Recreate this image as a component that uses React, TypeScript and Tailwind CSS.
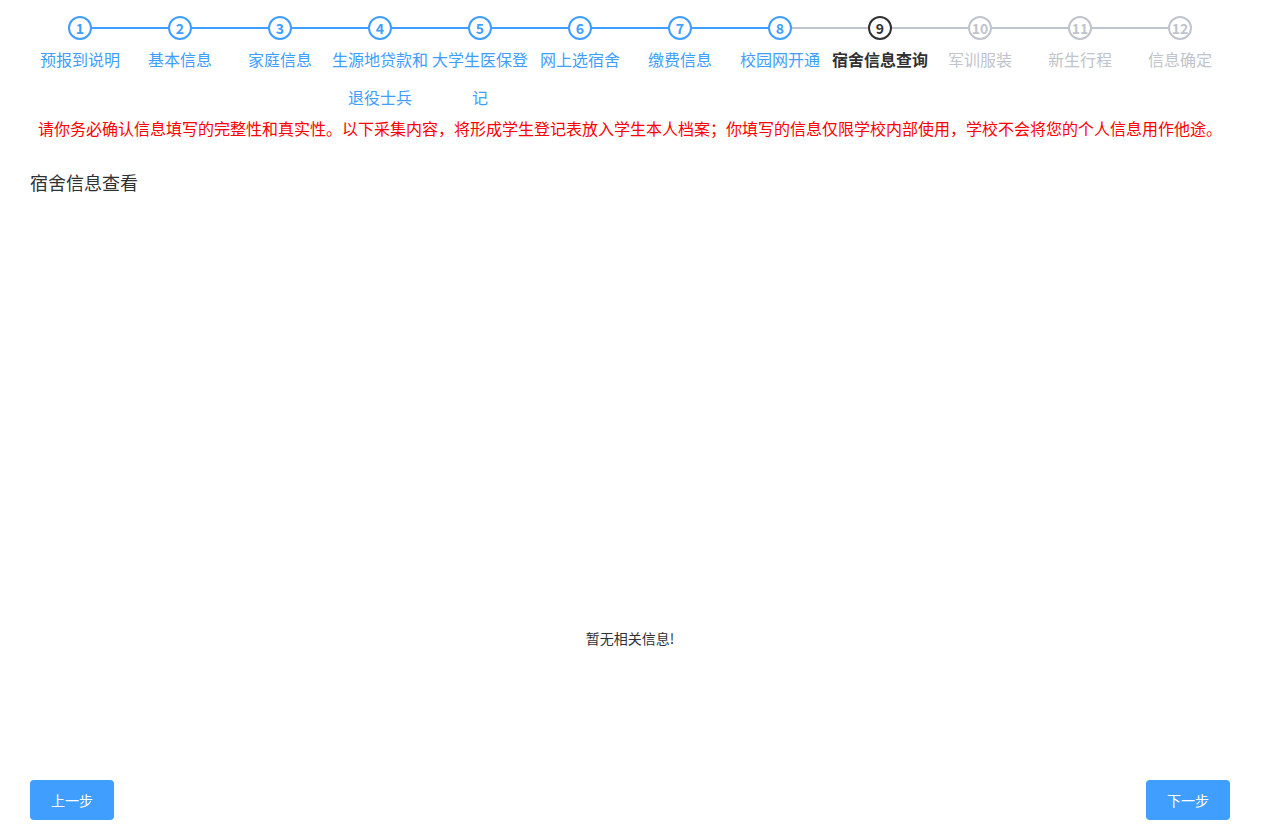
import React from "react"

type StepStatus = "finish" | "process" | "wait"

const steps: { title: string; status: StepStatus }[] = [
  { title: "预报到说明", status: "finish" },
  { title: "基本信息", status: "finish" },
  { title: "家庭信息", status: "finish" },
  { title: "生源地贷款和退役士兵", status: "finish" },
  { title: "大学生医保登记", status: "finish" },
  { title: "网上选宿舍", status: "finish" },
  { title: "缴费信息", status: "finish" },
  { title: "校园网开通", status: "finish" },
  { title: "宿舍信息查询", status: "process" },
  { title: "军训服装", status: "wait" },
  { title: "新生行程", status: "wait" },
  { title: "信息确定", status: "wait" },
]

const font = { fontFamily: '"Noto Sans CJK SC", "Noto Sans", sans-serif' }

function Step({ index, title, status, next }: { index: number; title: string; status: StepStatus; next?: StepStatus }) {
  const circle =
    status === "finish"
      ? "border-[#409EFF] text-[#409EFF]"
      : status === "process"
        ? "border-[#303133] text-[#303133]"
        : "border-[#C0C4CC] text-[#C0C4CC]"
  const label =
    status === "finish"
      ? "text-[#409EFF]"
      : status === "process"
        ? "text-[#303133] font-bold"
        : "text-[#C0C4CC]"
  return (
    <div className="relative w-[100px] shrink-0 flex flex-col items-center">
      <div className="relative w-full h-6 flex justify-center">
        {next && (
          <div
            className={`absolute top-[11px] left-1/2 w-full h-[2px] ${
              next === "finish" ? "bg-[#409EFF]" : "bg-[#C0C4CC]"
            }`}
          />
        )}
        <div
          className={`relative z-10 w-6 h-6 rounded-full border-2 bg-white flex items-center justify-center text-sm font-bold leading-none ${circle}`}
        >
          {index}
        </div>
      </div>
      <div className={`w-full text-center text-base leading-[38px] ${label}`}>{title}</div>
    </div>
  )
}

export default function App() {
  return (
    <div className="min-h-[832px] bg-white" style={font}>
      <div className="w-[1200px] ml-[30px] pt-4">
        <div className="flex">
          {steps.map((s, i) => (
            <Step key={s.title} index={i + 1} title={s.title} status={s.status} next={steps[i + 1]?.status} />
          ))}
        </div>
        <p className="text-center text-base leading-6 text-[#ff0000]">
          请你务必确认信息填写的完整性和真实性。以下采集内容，将形成学生登记表放入学生本人档案；你填写的信息仅限学校内部使用，学校不会将您的个人信息用作他途。
        </p>
        <h2 className="mt-[30px] text-lg leading-6 text-[#303133]">宿舍信息查看</h2>
        <div className="mt-[434px] text-center text-sm leading-5 text-[#303133]">暂无相关信息!</div>
        <div className="mt-[132px] flex justify-between">
          <button className="w-[84px] h-10 rounded bg-[#409EFF] text-white text-sm">上一步</button>
          <button className="w-[84px] h-10 rounded bg-[#409EFF] text-white text-sm">下一步</button>
        </div>
      </div>
    </div>
  )
}
